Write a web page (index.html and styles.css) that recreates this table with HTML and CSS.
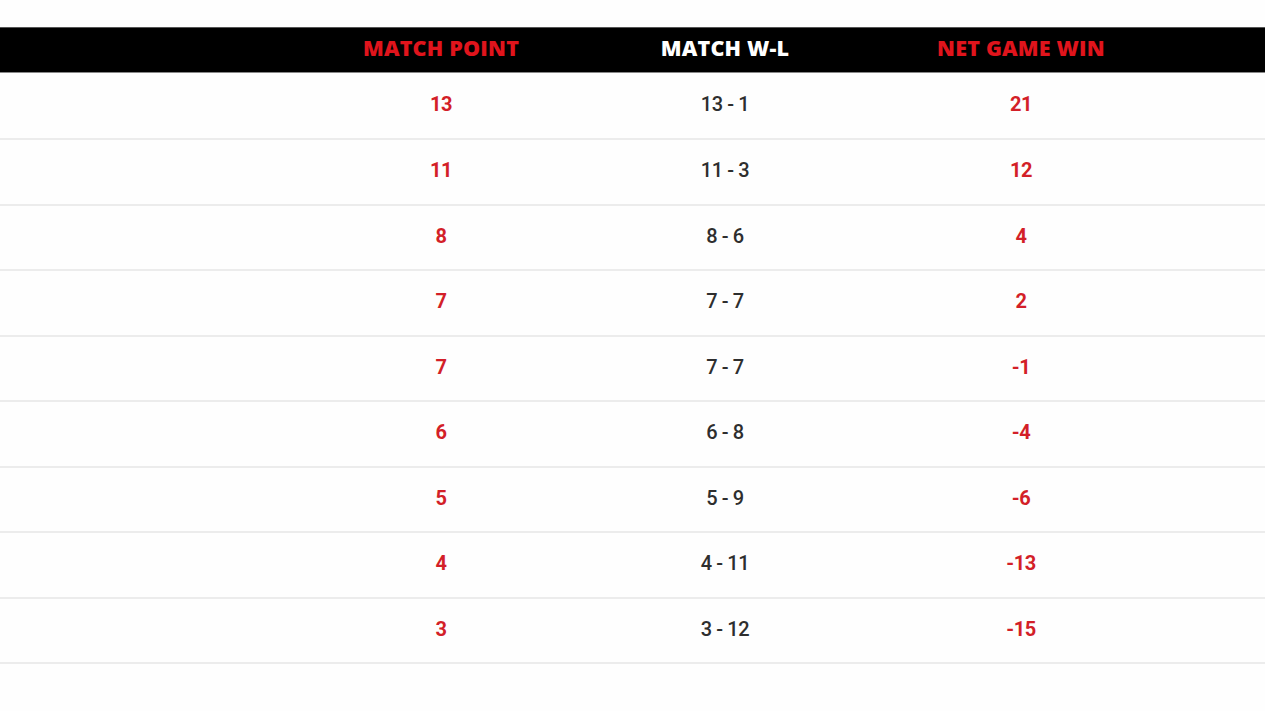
FILE: index.html
```html
<!DOCTYPE html>
<html>
<head>
<meta charset="utf-8">
<link rel="stylesheet" href="styles.css">
</head>
<body>
<div class="page">
  <div class="table">
    <div class="row head">
      <div class="cell"></div>
      <div class="cell red">MATCH POINT</div>
      <div class="cell white">MATCH W-L</div>
      <div class="cell red">NET GAME WIN</div>
      <div class="cell"></div>
    </div>
    <div class="row first"><div class="cell"></div><div class="cell num red">13</div><div class="cell num dark">13 - 1</div><div class="cell num red">21</div><div class="cell"></div></div>
    <div class="row"><div class="cell"></div><div class="cell num red">11</div><div class="cell num dark">11 - 3</div><div class="cell num red">12</div><div class="cell"></div></div>
    <div class="row"><div class="cell"></div><div class="cell num red">8</div><div class="cell num dark">8 - 6</div><div class="cell num red">4</div><div class="cell"></div></div>
    <div class="row"><div class="cell"></div><div class="cell num red">7</div><div class="cell num dark">7 - 7</div><div class="cell num red">2</div><div class="cell"></div></div>
    <div class="row"><div class="cell"></div><div class="cell num red">7</div><div class="cell num dark">7 - 7</div><div class="cell num red">-1</div><div class="cell"></div></div>
    <div class="row"><div class="cell"></div><div class="cell num red">6</div><div class="cell num dark">6 - 8</div><div class="cell num red">-4</div><div class="cell"></div></div>
    <div class="row"><div class="cell"></div><div class="cell num red">5</div><div class="cell num dark">5 - 9</div><div class="cell num red">-6</div><div class="cell"></div></div>
    <div class="row"><div class="cell"></div><div class="cell num red">4</div><div class="cell num dark">4 - 11</div><div class="cell num red">-13</div><div class="cell"></div></div>
    <div class="row"><div class="cell"></div><div class="cell num red">3</div><div class="cell num dark">3 - 12</div><div class="cell num red">-15</div><div class="cell"></div></div>
  </div>
</div>
</body>
</html>
```
FILE: styles.css
```css
html, body {
  margin: 0;
  padding: 0;
  background: #ffffff;
}
.page {
  width: 1265px;
  height: 711px;
  overflow: hidden;
  padding-top: 27px;
  box-sizing: border-box;
  background: #fefefe;
}
.table {
  display: flex;
  flex-direction: column;
}
.row {
  display: grid;
  grid-template-columns: 300px 282px 286px 306px 1fr;
  height: 65.5px;
  box-sizing: border-box;
  border-bottom: 2px solid #ececec;
  align-items: center;
}
.row.first {
  height: 67px;
}
.row.head {
  height: 46px;
  background: #000;
  border-top: 1px solid #555;
  border-bottom: 1px solid #888;
}
.cell {
  text-align: center;
}
.head .cell {
  font-family: "Open Sans", "Liberation Sans", sans-serif;
  font-weight: 800;
  font-size: 21.5px;
  letter-spacing: 0.2px;
  line-height: 1;
  padding-bottom: 4px;
}
.head .red { color: #e0141c; }
.head .white { color: #ffffff; }
.num {
  font-family: Roboto, "Liberation Sans", sans-serif;
  font-weight: 500;
  font-size: 20px;
  letter-spacing: -0.4px;
  line-height: 1;
  padding-bottom: 3px;
}
.num.red { color: #d31f28; font-weight: 700; }
.num.dark { color: #2e2e2e; }
```
